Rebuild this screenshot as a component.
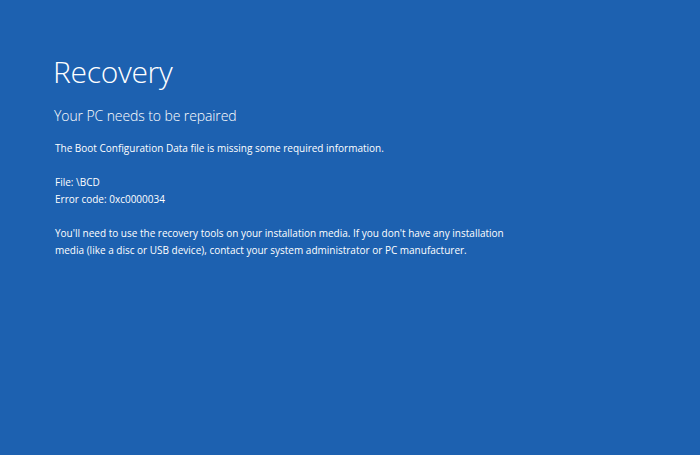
export default function App() {
  return (
    <div
      className="w-[700px] h-[455px] bg-[#1d61b0] text-white pl-[53px] pt-[51px]"
      style={{ fontFamily: '"Open Sans", "Noto Sans", sans-serif' }}
    >
      <h1 className="text-[30px] font-light leading-[42px] tracking-[-0.3px]">Recovery</h1>
      <h2 className="mt-[13px] text-[14px] font-light leading-[20px] tracking-[-0.1px] pl-[1px]">
        Your PC needs to be repaired
      </h2>
      <div className="mt-[14px] pl-[2px] text-[10px] leading-[17px]">
        <p>The Boot Configuration Data file is missing some required information.</p>
        <p className="mt-[17px]">File: \BCD</p>
        <p>Error code: 0xc0000034</p>
        <p className="mt-[17px] w-[470px]">
          You'll need to use the recovery tools on your installation media. If you don't have any installation
          media (like a disc or USB device), contact your system administrator or PC manufacturer.
        </p>
      </div>
    </div>
  );
}
